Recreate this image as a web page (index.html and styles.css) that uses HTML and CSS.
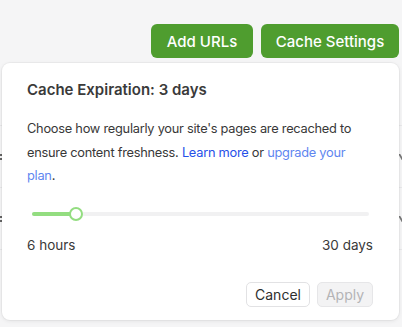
FILE: index.html
```html
<!DOCTYPE html>
<html>
<head>
<meta charset="utf-8">
<link rel="stylesheet" href="styles.css">
</head>
<body>
<div class="page">
  <div class="toolbar">
    <button class="btn-primary btn-add">Add URLs</button>
    <button class="btn-primary btn-settings">Cache Settings</button>
  </div>
  <div class="table">
    <div class="row"></div>
    <div class="row"><span class="mark-l"></span><span class="mark-r"></span></div>
    <div class="row"><span class="mark-l"></span><span class="mark-r"></span></div>
  </div>
  <div class="popover">
    <h2 class="title">Cache Expiration: 3 days</h2>
    <p class="desc">Choose how regularly your site's pages are recached to ensure content freshness. <a class="link-strong" href="#">Learn more</a> or <a class="link-soft" href="#">upgrade your</a> <a class="link-soft" href="#">plan</a>.</p>
    <div class="slider">
      <div class="track"><div class="fill"></div><div class="thumb"></div></div>
    </div>
    <div class="range-labels"><span>6 hours</span><span>30 days</span></div>
    <div class="actions">
      <button class="btn-secondary">Cancel</button>
      <button class="btn-disabled" disabled>Apply</button>
    </div>
  </div>
</div>
</body>
</html>
```
FILE: styles.css
```css
* { box-sizing: border-box; }
html, body { margin: 0; padding: 0; }
body {
  background: #f5f5f6;
  font-family: Inter, "Noto Sans", "Liberation Sans", sans-serif;
  color: #343434;
  width: 402px;
  height: 327px;
  overflow: hidden;
}
.page { position: relative; height: 327px; }
.toolbar {
  display: flex;
  justify-content: flex-end;
  gap: 8px;
  padding: 24px 3px 0 0;
}
.btn-primary {
  height: 34px;
  background: #4f9d2f;
  color: #fff;
  border: none;
  border-radius: 6px;
  font-family: inherit;
  font-size: 15px;
  font-weight: 500;
  padding: 0;
  white-space: nowrap;
}
.btn-add { width: 102px; }
.btn-settings { width: 138px; }
.table { margin-top: 6px; }
.row {
  height: 62px;
  border-bottom: 1px solid #e8e8ea;
  display: flex;
  justify-content: space-between;
  align-items: center;
}
.mark-l, .mark-r {
  width: 2px;
  height: 6px;
  border-left: 2px dotted #666;
}
.mark-r { width: 3px; border-left: none; border-right: 2px solid #777; transform: skewX(30deg); }
.popover {
  position: absolute;
  left: 2px;
  top: 63px;
  width: 397px;
  height: 257px;
  background: #fff;
  border-radius: 8px;
  box-shadow: 0 1px 4px rgba(0,0,0,0.08), 0 0 0 1px rgba(0,0,0,0.03);
  padding: 17px 24px 0 25px;
}
.title {
  margin: 0;
  font-size: 15px;
  font-weight: 600;
  color: #3a3a3a;
  line-height: 20px;
}
.desc {
  margin: 17px 0 0;
  max-width: 334px;
  font-size: 12.8px;
  letter-spacing: -0.25px;
  line-height: 23.5px;
  color: #383838;
}
.desc a { text-decoration: none; }
.link-strong { color: #2650e8; }
.link-soft { color: #5f86f0; }
.slider { padding: 24px 6px 0 5px; }
.track {
  position: relative;
  height: 4px;
  border-radius: 2px;
  background: #f1f1f2;
}
.fill {
  width: 44px;
  height: 4px;
  border-radius: 2px;
  background: #93dd80;
}
.thumb {
  position: absolute;
  left: 37px;
  top: -5px;
  width: 14px;
  height: 14px;
  border-radius: 50%;
  background: #fff;
  border: 2px solid #93dd80;
}
.range-labels {
  display: flex;
  justify-content: space-between;
  margin-top: 20px;
  padding-right: 2px;
  font-size: 13.5px;
  color: #3a3a3a;
  line-height: 18px;
}
.actions {
  display: flex;
  justify-content: flex-end;
  gap: 7px;
  margin-top: 28px;
  padding-right: 2px;
}
.btn-secondary, .btn-disabled {
  height: 25px;
  border-radius: 5px;
  font-family: inherit;
  font-size: 14px;
  padding: 0;
}
.btn-secondary {
  background: #fff;
  border: 1px solid #e2e2e4;
  color: #2e2e2e;
  width: 64px;
}
.btn-disabled {
  background: #f3f3f4;
  border: 1px solid #e6e6e8;
  color: #b4b4b6;
  width: 56px;
}
```
